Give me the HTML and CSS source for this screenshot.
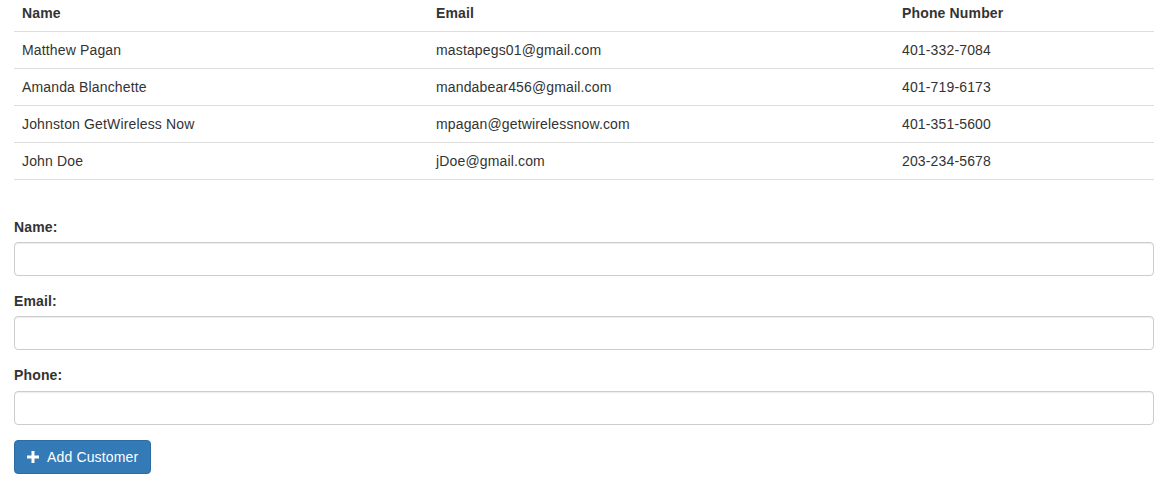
FILE: index.html
```html
<!DOCTYPE html>
<html>
<head>
<meta charset="utf-8">
<link rel="stylesheet" href="styles.css">
</head>
<body>
<div class="page">
  <table class="customers">
    <thead>
      <tr><th class="c1">Name</th><th class="c2">Email</th><th class="c3">Phone Number</th></tr>
    </thead>
    <tbody>
      <tr><td>Matthew Pagan</td><td>mastapegs01@gmail.com</td><td>401-332-7084</td></tr>
      <tr><td>Amanda Blanchette</td><td>mandabear456@gmail.com</td><td>401-719-6173</td></tr>
      <tr><td>Johnston GetWireless Now</td><td>mpagan@getwirelessnow.com</td><td>401-351-5600</td></tr>
      <tr><td>John Doe</td><td>jDoe@gmail.com</td><td>203-234-5678</td></tr>
    </tbody>
  </table>
  <form class="form">
    <div class="group">
      <label class="label">Name:</label>
      <input class="control" type="text">
    </div>
    <div class="group">
      <label class="label">Email:</label>
      <input class="control" type="text">
    </div>
    <div class="group">
      <label class="label">Phone:</label>
      <input class="control" type="text">
    </div>
    <button class="btn" type="button"><svg class="plus" width="12" height="12" viewBox="0 0 12 12"><rect x="4.5" y="0" width="3" height="12" fill="#fff"/><rect x="0" y="4.5" width="12" height="3" fill="#fff"/></svg>Add Customer</button>
  </form>
</div>
</body>
</html>
```
FILE: styles.css
```css
* { box-sizing: border-box; }
html, body { margin: 0; padding: 0; background: #fff; }
body {
  font-family: "Liberation Sans", Arial, Helvetica, sans-serif;
  font-size: 14px;
  line-height: 20px;
  color: #333;
  letter-spacing: 0.15px;
}
.page {
  width: 1140px;
  margin-left: 14px;
  margin-top: -5px;
}
.customers {
  width: 100%;
  border-collapse: collapse;
  margin-bottom: 37px;
}
.customers th, .customers td {
  padding: 8px;
  text-align: left;
  vertical-align: top;
  border-bottom: 1px solid #ddd;
}
.customers th { font-weight: bold; }
.c1 { width: 414px; }
.c2 { width: 466px; }
.c3 { width: 260px; }
.group { margin-bottom: 15px; }
.label {
  display: block;
  font-weight: bold;
  margin-bottom: 5px;
}
.control {
  display: block;
  width: 100%;
  height: 34px;
  padding: 6px 12px;
  font-family: inherit;
  font-size: 14px;
  color: #555;
  background: #fff;
  border: 1px solid #ccc;
  border-radius: 4px;
  box-shadow: inset 0 1px 1px rgba(0,0,0,.075);
  outline: none;
}
.group:last-of-type .label { margin-bottom: 6px; }
.btn {
  display: inline-flex;
  align-items: center;
  height: 34px;
  padding: 6px 12px;
  font-family: inherit;
  font-size: 14px;
  line-height: 20px;
  letter-spacing: 0.15px;
  color: #fff;
  background: #337ab7;
  border: 1px solid #2e6da4;
  border-radius: 4px;
  cursor: pointer;
}
.plus { margin-right: 8px; margin-top: -1px; }
```
